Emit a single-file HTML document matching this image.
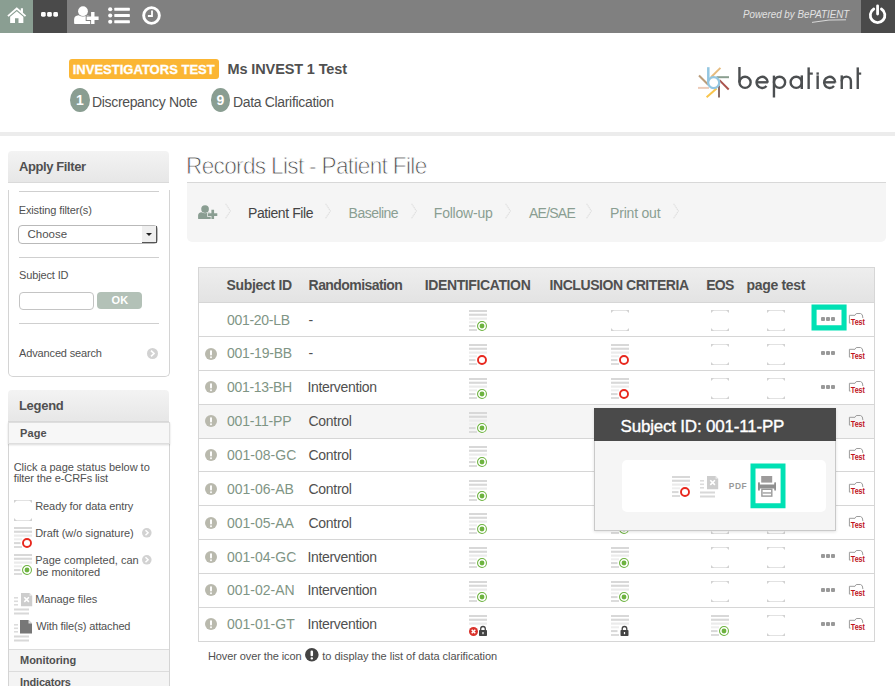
<!DOCTYPE html>
<html>
<head>
<meta charset="utf-8">
<title>Records List - Patient File</title>
<style>
*{box-sizing:border-box;margin:0;padding:0}
html,body{width:895px;height:686px;overflow:hidden;background:#fff}
body{font-family:"Liberation Sans",sans-serif;color:#505050;position:relative;font-size:14px}
.abs{position:absolute}
.t{position:absolute;white-space:nowrap;line-height:1}
svg{position:absolute;overflow:visible}
#bar{left:0;top:0;width:895px;height:33px;background:#808080}
#home{left:0;top:0;width:33px;height:33px;background:#8a9e92}
#dots{left:33px;top:0;width:34px;height:33px;background:#4a4a4a}
#power{left:861px;top:0;width:34px;height:33px;background:#4a4a4a}
#strip{left:0;top:132px;width:895px;height:4px;background:#ececec}
#badge{left:69px;top:59px;width:150px;height:19.5px;border-radius:3px;background:#fbb634;color:#fff;font-weight:bold;font-size:13.5px;line-height:18px;text-align:center;white-space:nowrap;letter-spacing:-0.3px}
.circ{width:19.6px;height:24px;border-radius:50%;background:#8a9e92;color:#fff;font-weight:bold;font-size:14px;line-height:25px;text-align:center}
.phead{left:8px;width:161px;height:32px;border-radius:4px 4px 0 0;background:linear-gradient(#f3f3f3,#e7e7e7);border-bottom:1px solid #dadada}
.hr{height:1px;background:#cfcfcf;left:19px;width:140px}
.sub{left:9px;width:160px;background:#f4f4f4;border-top:1px solid #dcdcdc}
.s12{font-size:12px}
.s11{font-size:11px}
#crumb{left:187px;top:182px;width:699px;height:60px;background:#f5f5f5;border-top:1px solid #d8d8d8;border-radius:0 0 5px 5px}
.cr{font-size:14px;color:#8a9e92;top:206px}
#thead{left:198px;top:267px;width:677px;height:36px;background:linear-gradient(#eeeeee,#e3e3e3);border:1px solid #d6d6d6}
.th{font-weight:bold;font-size:14px;color:#444;top:278px;letter-spacing:-0.2px}
.row{left:198px;width:677px;border:1px solid #d6d6d6;border-top:none;background:#fff}
.sid{color:#7f9585;font-size:14px;left:227px}
.rnd{color:#444;font-size:14px;left:308px}
</style>
</head>
<body>

<svg width="0" height="0" style="position:absolute">
<defs>
<g id="lines">
 <rect x="0" y="0" width="18" height="2" fill="#d8d8d8"/>
 <rect x="0" y="3.7" width="18" height="2.100" fill="#d8d8d8"/>
 <rect x="0" y="7.5" width="18" height="2.200" fill="#ebebeb"/>
 <rect x="0" y="11.3" width="8" height="2" fill="#eeeeee"/>
 <rect x="0" y="15.1" width="6.500" height="2" fill="#d8d8d8"/>
 <rect x="0" y="19" width="8" height="2" fill="#dcdcdc"/>
</g>
<g id="done">
 <use href="#lines"/>
 <circle cx="13" cy="16" r="5.6" fill="#fff"/>
 <circle cx="13" cy="16" r="4.450" fill="none" stroke="#6db33f" stroke-width="1.050"/>
 <circle cx="13" cy="16" r="2.450" fill="#6db33f"/>
</g>
<g id="draft">
 <use href="#lines"/>
 <circle cx="13" cy="16" r="5.6" fill="#fff"/>
 <circle cx="13" cy="16" r="4" fill="#fff" stroke="#e8281e" stroke-width="1.9"/>
</g>
<g id="empty">
 <rect x="0" y="0" width="18" height="1" fill="#e2e2e2"/><rect x="0" y="20" width="18" height="1" fill="#e2e2e2"/>
 <path d="M0 0H3L0 3ZM18 0H15L18 3ZM0 21H3L0 18ZM18 21H15L18 18Z" fill="#d2d2d2"/>
</g>
<g id="lock">
 <rect x="0" y="4" width="8" height="6" rx="0.8" fill="#444"/>
 <path d="M1.7 4.5V2.8a2.3 2.3 0 0 1 4.6 0V4.5" fill="none" stroke="#444" stroke-width="1.3"/>
 <rect x="3.4" y="6" width="1.2" height="2.2" fill="#fff"/>
</g>
<g id="more">
 <rect x="0" y="0" width="4" height="4" rx="1" fill="#999"/>
 <rect x="5" y="0" width="4" height="4" rx="1" fill="#999"/>
 <rect x="10" y="0" width="4" height="4" rx="1" fill="#999"/>
</g>
<g id="test">
 <path d="M1.600 10.100H0.4V2.300H6L7.300 0.5H11.500Q13.900 0.8 13.900 5.100" fill="none" stroke="#9c9c9c" stroke-width="1"/>
 <text x="1.8" y="11.900" font-family="Liberation Sans, sans-serif" font-size="8.600" font-weight="bold" fill="#c0141d" textLength="14.200" lengthAdjust="spacingAndGlyphs">Test</text>
</g>
<g id="info">
 <circle cx="6" cy="6" r="6" fill="#b9b9ad"/>
 <rect x="5.050" y="2.2" width="1.900" height="5.200" rx="0.9" fill="#fff"/>
 <rect x="5.050" y="8.300" width="1.900" height="1.900" rx="0.9" fill="#fff"/>
</g>
<g id="arrow">
 <circle cx="5.5" cy="5.5" r="5.5" fill="#d2d2d2"/>
 <path d="M4 2.6L7 5.5L4 8.4" fill="none" stroke="#fff" stroke-width="1.7"/>
</g>
<g id="userplus">
 <circle cx="9" cy="5.2" r="4.9"/>
 <path d="M0.1 17.200V13.500Q0.1 9.600 4.600 9.200Q9 12 13.400 9.200Q17.600 9.800 17.600 13V18H1Q0.1 18 0.1 17.200Z"/>
 <path d="M17.100 6h3.400v4.500h4.100v3.600h-4.100v3.900h-3.400v-3.900h-4.500v-3.600h4.500z" stroke="var(--bg)" stroke-width="1.800" paint-order="stroke"/>
</g>
</defs>
</svg>

<div id="bar" class="abs"></div><div id="home" class="abs"></div><div id="dots" class="abs"></div><div id="power" class="abs"></div><div id="strip" class="abs"></div>
<svg style="left:7px;top:6.5px" width="19.5" height="16.5" viewBox="0 0 20 17"><path d="M10 0.3L0.3 8.7L1.6 10L10 2.9L18.4 10L19.7 8.700L16.400 5.800V1.300H14.200V3.900Z" fill="#fff"/><path d="M10 4.3L3.2 10V16.500H8.200V11.500H11.800V16.500H16.800V10Z" fill="#fff"/></svg>
<svg style="left:40.8px;top:12px" width="17" height="5" viewBox="0 0 18 5.3"><rect x="0" y="0" width="5" height="5" rx="1.5" fill="#fff"/><rect x="6.5" y="0" width="5" height="5" rx="1.5" fill="#fff"/><rect x="13" y="0" width="5" height="5" rx="1.5" fill="#fff"/></svg>
<svg style="left:74.4px;top:6px;--bg:#808080" width="24.6" height="18.5" viewBox="0 0 24.6 18.5" fill="#fff"><use href="#userplus"/></svg>
<svg style="left:108.3px;top:6.8px" width="22" height="17" viewBox="0 0 23 18" fill="#fff"><circle cx="2.2" cy="2.400" r="2.200"/><circle cx="2.2" cy="9" r="2.2"/><circle cx="2.2" cy="15.600" r="2.200"/><rect x="6.5" y="0.8" width="16.500" height="3.200" rx="0.5"/><rect x="6.5" y="7.4" width="16.500" height="3.200" rx="0.5"/><rect x="6.5" y="14" width="16.500" height="3.200" rx="0.5"/></svg>
<svg style="left:142.3px;top:6px" width="19" height="19" viewBox="0 0 19 19"><circle cx="9.5" cy="9.5" r="7.850" fill="none" stroke="#fff" stroke-width="2.900"/><path d="M10 4.600V10H5.900" fill="none" stroke="#fff" stroke-width="1.800"/></svg>
<div class="t" style="left:743.20px;top:8.74px;font-size:10.7px;font-style:italic;color:#e2e2e2;transform-origin:0 0;transform:scaleX(0.9162);">Powered by BePATIENT</div>
<svg style="left:812px;top:19px" width="34" height="4" viewBox="0 0 34 4"><path d="M0 3.400Q17 0 34 0.800" fill="none" stroke="#e2e2e2" stroke-width="0.900"/></svg>
<svg style="left:868.3px;top:5.2px" width="19.2" height="19.2" viewBox="0 0 20 20"><path d="M6 4.200A7.600 7.600 0 1 0 14 4.200" fill="none" stroke="#fff" stroke-width="2.900" stroke-linecap="round"/><path d="M10 0.800V9.500" stroke="#fff" stroke-width="2.900" stroke-linecap="round"/></svg>
<div id="badge" class="abs"></div>
<div class="t" style="left:72.70px;top:62.80px;font-size:13px;font-weight:bold;color:#fff;letter-spacing:0.012px;-webkit-text-stroke:0.3px #fff;">INVESTIGATORS TEST</div>
<div class="t" style="left:227.60px;top:61.83px;font-size:14.5px;font-weight:bold;letter-spacing:-0.133px;">Ms INVEST 1 Test</div>
<div class="abs circ" style="left:70px;top:87.7px">1</div>
<div class="t" style="left:92.00px;top:95.15px;font-size:14px;letter-spacing:-0.333px;">Discrepancy Note</div>
<div class="abs circ" style="left:210.6px;top:87.7px">9</div>
<div class="t" style="left:232.90px;top:95.15px;font-size:14px;letter-spacing:-0.324px;">Data Clarification</div>
<svg style="left:0;top:0" width="895" height="130" viewBox="0 0 895 130" fill="none" stroke-linecap="butt">
<g stroke-width="2">
<path d="M720.4 67.9L711 77.3" stroke="#e6bb7e"/>
<path d="M716.5 77.2H729" stroke="#8a9e8f"/>
<path d="M719.4 80.1L728.7 89.5" stroke="#ab524c"/>
<path d="M719 85.5V97.4" stroke="#8b6e69"/>
<path d="M716.6 88.4L706.6 97.3" stroke="#f8c54c"/>
<path d="M698 87.9H709" stroke="#edccb9"/>
<path d="M699 75.5L708.2 84.7" stroke="#bb9d7b"/>
</g>
<path d="M708.3 67.2V82.4" stroke="#93c6e1" stroke-width="2.5"/>
<circle cx="713.7" cy="82.6" r="5.55" stroke="#93c6e1" stroke-width="2.3" fill="#fff"/>
<g stroke="#4c4f51" stroke-width="2.4">
<path d="M739.45 67V82.4"/><circle cx="745.05" cy="82.3" r="5.6"/>
<path d="M756.6 82.3H767.9"/><path d="M767.8 82.4A5.6 5.6 0 1 0 766.5 86"/>
<path d="M773.95 75.6V97.5"/><circle cx="779.55" cy="82.3" r="5.6"/>
<circle cx="796.2" cy="82.3" r="5.6"/><path d="M801.8 75.4V89"/>
<path d="M808.65 67.4V89"/><path d="M808.65 73.6H812.8" stroke-width="2.2"/>
<path d="M817.65 75.4V89"/><path d="M817.65 72.4V74.7"/>
<path d="M824.1 82.3H835.4"/><path d="M835.3 82.4A5.6 5.6 0 1 0 834 86"/>
<path d="M841.75 75.4V89"/><path d="M841.75 81.2A4.575 4.575 0 0 1 850.9 81.2V89"/>
<path d="M857.75 67.4V89"/><path d="M857.75 73.6H861.2" stroke-width="2.2"/>
</g>
</svg>
<div class="abs phead" style="top:151px"></div>
<div class="t" style="left:19.10px;top:160.10px;font-size:13px;font-weight:bold;letter-spacing:-0.418px;">Apply Filter</div>
<div class="abs" style="left:8px;top:190px;width:162px;height:187px;border:1px solid #d4d4d4;border-top:none;border-radius:0 0 5px 5px"></div>
<div class="abs hr" style="top:191px"></div>
<div class="t" style="left:18.70px;top:205.09px;font-size:11px;letter-spacing:-0.118px;">Existing filter(s)</div>
<div class="abs" style="left:18px;top:225px;width:140px;height:19px;border:1px solid #b9b9b9;border-radius:4px;background:#fff"></div>
<div class="abs" style="left:142px;top:226px;width:15px;height:17px;background:#efefef;border-right:1.3px solid #555;border-bottom:1.3px solid #555"></div>
<svg style="left:146px;top:233px" width="6" height="3" viewBox="0 0 6 3"><path d="M0 0H6L3 3Z" fill="#222"/></svg>
<div class="t" style="left:27.60px;top:229.37px;font-size:11.5px;letter-spacing:-0.040px;">Choose</div>
<div class="abs hr" style="top:257px"></div>
<div class="t" style="left:19.10px;top:269.79px;font-size:11px;letter-spacing:-0.144px;">Subject ID</div>
<div class="abs" style="left:19px;top:292px;width:75px;height:18px;border:1px solid #c4c4c4;border-radius:4px;background:#fff"></div>
<div class="abs" style="left:97px;top:292px;width:45px;height:17px;border-radius:4px;background:#b3c1b7"></div>
<div class="t" style="left:111.60px;top:294.99px;font-size:11px;font-weight:bold;color:#fff;letter-spacing:0.100px;">OK</div>
<div class="abs hr" style="top:323px"></div>
<div class="t" style="left:19.10px;top:347.69px;font-size:11px;letter-spacing:-0.150px;">Advanced search</div>
<svg style="left:146.500px;top:348px" width="11" height="11"><use href="#arrow"/></svg>
<div class="abs phead" style="top:390px"></div>
<div class="t" style="left:18.90px;top:398.80px;font-size:13px;font-weight:bold;letter-spacing:-0.260px;">Legend</div>
<div class="abs" style="left:8px;top:444px;width:162px;height:250px;border-left:1px solid #d4d4d4;border-right:1px solid #d4d4d4"></div>
<div class="abs" style="left:8px;top:422px;width:162px;height:22px;background:#f7f7f7;border:1px solid #dedede;box-shadow:0 1px 2px rgba(0,0,0,0.15)"></div>
<div class="t" style="left:20.10px;top:427.59px;font-size:11px;font-weight:bold;letter-spacing:0.067px;">Page</div>
<div class="t" style="left:13.70px;top:462.19px;font-size:11px;letter-spacing:-0.033px;">Click a page status below to</div>
<div class="t" style="left:13.70px;top:473.29px;font-size:11px;letter-spacing:-0.100px;">filter the e-CRFs list</div>
<svg style="left:14px;top:500px" width="18" height="21"><use href="#empty"/></svg>
<div class="t" style="left:35.20px;top:500.79px;font-size:11px;letter-spacing:-0.079px;">Ready for data entry</div>
<svg style="left:14px;top:527px" width="18" height="21"><use href="#draft"/></svg>
<div class="t" style="left:35.20px;top:527.99px;font-size:11px;letter-spacing:-0.055px;">Draft (w/o signature)</div>
<svg style="left:141.7px;top:528.2px" width="9.6" height="9.6" viewBox="0 0 11 11"><use href="#arrow"/></svg>
<svg style="left:14px;top:554px" width="18" height="21"><use href="#done"/></svg>
<div class="t" style="left:35.20px;top:554.89px;font-size:11px;letter-spacing:0.011px;">Page completed, can</div>
<div class="t" style="left:36.20px;top:566.79px;font-size:11px;letter-spacing:-0.018px;">be monitored</div>
<svg style="left:141.7px;top:555.2px" width="9.6" height="9.6" viewBox="0 0 11 11"><use href="#arrow"/></svg>
<svg style="left:14px;top:593px" width="18" height="22" viewBox="0 0 18 22">
<path d="M7 0H15.500L18.200 2.700V13.200H7Z" fill="#cdcdcd"/><path d="M15.500 0V2.700H18.200Z" fill="#e8e8e8"/>
<path d="M10.300 4.300L14.900 8.900M14.900 4.300L10.300 8.900" stroke="#fff" stroke-width="1.600"/>
<rect x="0" y="4" width="4" height="1.600" fill="#dcdcdc"/><rect x="0" y="7.500" width="4" height="1.600" fill="#dcdcdc"/><rect x="0" y="11" width="4" height="1.600" fill="#dcdcdc"/>
<rect x="0" y="15.500" width="15" height="2" fill="#d8d8d8"/><rect x="0" y="19.500" width="15" height="2" fill="#d8d8d8"/></svg>
<div class="t" style="left:35.20px;top:593.69px;font-size:11px;letter-spacing:-0.027px;">Manage files</div>
<svg style="left:14px;top:620px" width="18" height="22" viewBox="0 0 18 22">
<path d="M6 0H14.500L18 3.500V13.500H6Z" fill="#777"/><path d="M14.500 0V3.500H18Z" fill="#ddd"/>
<rect x="0" y="4" width="4" height="1.600" fill="#dcdcdc"/><rect x="0" y="7.500" width="4" height="1.600" fill="#dcdcdc"/><rect x="0" y="11" width="4" height="1.600" fill="#dcdcdc"/>
<rect x="0" y="15.500" width="15" height="2" fill="#d8d8d8"/><rect x="0" y="19.500" width="15" height="2" fill="#d8d8d8"/></svg>
<div class="t" style="left:36.20px;top:620.89px;font-size:11px;letter-spacing:-0.145px;">With file(s) attached</div>
<div class="abs sub" style="top:649px;height:22px"></div>
<div class="t" style="left:20.10px;top:654.79px;font-size:11px;font-weight:bold;letter-spacing:-0.078px;">Monitoring</div>
<div class="abs sub" style="top:671px;height:22px"></div>
<div class="t" style="left:20.10px;top:677.29px;font-size:11px;font-weight:bold;letter-spacing:-0.189px;">Indicators</div>
<div class="t" style="left:185.94px;top:154.33px;font-size:24.3px;color:#484848;letter-spacing:-0.723px;transform-origin:0 0;transform:scaleX(0.9300);-webkit-text-stroke:0.8px #fff;">Records List - Patient File</div>
<div id="crumb" class="abs"></div>
<svg style="left:197.7px;top:204.8px;--bg:#f5f5f5" width="19.3" height="14.5" viewBox="0 0 24.6 18.5" fill="#8a9e92"><use href="#userplus"/></svg>
<svg style="left:224.7px;top:203.4px" width="7" height="16" viewBox="0 0 7 16"><path d="M0.6 0.700L5.400 8L0.6 15.300" fill="none" stroke="#dedede" stroke-width="1.100" stroke-dasharray="1.400 0.600"/></svg>
<svg style="left:324.7px;top:203.4px" width="7" height="16" viewBox="0 0 7 16"><path d="M0.6 0.700L5.400 8L0.6 15.300" fill="none" stroke="#dedede" stroke-width="1.100" stroke-dasharray="1.400 0.600"/></svg>
<svg style="left:411.0px;top:203.4px" width="7" height="16" viewBox="0 0 7 16"><path d="M0.6 0.700L5.400 8L0.6 15.300" fill="none" stroke="#dedede" stroke-width="1.100" stroke-dasharray="1.400 0.600"/></svg>
<svg style="left:505.2px;top:203.4px" width="7" height="16" viewBox="0 0 7 16"><path d="M0.6 0.700L5.400 8L0.6 15.300" fill="none" stroke="#dedede" stroke-width="1.100" stroke-dasharray="1.400 0.600"/></svg>
<svg style="left:586.4px;top:203.4px" width="7" height="16" viewBox="0 0 7 16"><path d="M0.6 0.700L5.400 8L0.6 15.300" fill="none" stroke="#dedede" stroke-width="1.100" stroke-dasharray="1.400 0.600"/></svg>
<svg style="left:672.9px;top:203.4px" width="7" height="16" viewBox="0 0 7 16"><path d="M0.6 0.700L5.400 8L0.6 15.300" fill="none" stroke="#dedede" stroke-width="1.100" stroke-dasharray="1.400 0.600"/></svg>
<div class="t" style="left:248.00px;top:205.95px;font-size:14px;color:#444;letter-spacing:-0.418px;">Patient File</div>
<div class="t" style="left:348.60px;top:205.95px;font-size:14px;color:#8a9e92;letter-spacing:-0.529px;">Baseline</div>
<div class="t" style="left:433.80px;top:205.95px;font-size:14px;color:#8a9e92;letter-spacing:-0.212px;">Follow-up</div>
<div class="t" style="left:529.00px;top:205.95px;font-size:14px;color:#8a9e92;letter-spacing:-0.760px;">AE/SAE</div>
<div class="t" style="left:610.10px;top:205.95px;font-size:14px;color:#8a9e92;letter-spacing:-0.213px;">Print out</div>
<div id="thead" class="abs"></div>
<div class="t" style="left:226.60px;top:278.15px;font-size:14px;font-weight:bold;letter-spacing:-0.333px;">Subject ID</div>
<div class="t" style="left:308.60px;top:278.15px;font-size:14px;font-weight:bold;letter-spacing:-0.575px;">Randomisation</div>
<div class="t" style="left:424.70px;top:278.15px;font-size:14px;font-weight:bold;letter-spacing:-0.377px;">IDENTIFICATION</div>
<div class="t" style="left:549.60px;top:278.15px;font-size:14px;font-weight:bold;letter-spacing:-0.447px;">INCLUSION CRITERIA</div>
<div class="t" style="left:706.20px;top:278.15px;font-size:14px;font-weight:bold;letter-spacing:-0.700px;">EOS</div>
<div class="t" style="left:746.40px;top:278.15px;font-size:14px;font-weight:bold;letter-spacing:-0.300px;">page test</div>
<div class="abs row" style="top:303px;height:34px;background:#fff"></div>
<div class="t" style="left:227.00px;top:312.57px;font-size:14px;color:#7f9585;letter-spacing:-0.288px;">001-20-LB</div>
<div class="t" style="left:308.40px;top:312.57px;font-size:14px;">-</div>
<svg style="left:469px;top:310.3px" width="18" height="21"><use href="#done"/></svg>
<svg style="left:611px;top:310.3px" width="18" height="21"><use href="#empty"/></svg>
<svg style="left:711px;top:310.3px" width="18" height="21"><use href="#empty"/></svg>
<svg style="left:767px;top:310.3px" width="18" height="21"><use href="#empty"/></svg>
<svg style="left:821px;top:316.9px" width="14" height="4"><use href="#more"/></svg>
<svg style="left:849px;top:313.0px" width="17" height="13"><use href="#test"/></svg>
<div class="abs row" style="top:337px;height:34px;background:#fff"></div>
<div class="t" style="left:227.00px;top:346.42px;font-size:14px;color:#7f9585;letter-spacing:-0.225px;">001-19-BB</div>
<div class="t" style="left:308.40px;top:346.42px;font-size:14px;">-</div>
<svg style="left:205px;top:347.5px" width="12" height="12"><use href="#info"/></svg>
<svg style="left:469px;top:344.2px" width="18" height="21"><use href="#draft"/></svg>
<svg style="left:611px;top:344.2px" width="18" height="21"><use href="#draft"/></svg>
<svg style="left:711px;top:344.2px" width="18" height="21"><use href="#empty"/></svg>
<svg style="left:767px;top:344.2px" width="18" height="21"><use href="#empty"/></svg>
<svg style="left:821px;top:350.8px" width="14" height="4"><use href="#more"/></svg>
<svg style="left:849px;top:346.9px" width="17" height="13"><use href="#test"/></svg>
<div class="abs row" style="top:371px;height:34px;background:#fff"></div>
<div class="t" style="left:227.00px;top:380.27px;font-size:14px;color:#7f9585;letter-spacing:-0.312px;">001-13-BH</div>
<div class="t" style="left:307.40px;top:380.27px;font-size:14px;letter-spacing:-0.318px;">Intervention</div>
<svg style="left:205px;top:381.3px" width="12" height="12"><use href="#info"/></svg>
<svg style="left:469px;top:378.0px" width="18" height="21"><use href="#done"/></svg>
<svg style="left:611px;top:378.0px" width="18" height="21"><use href="#draft"/></svg>
<svg style="left:711px;top:378.0px" width="18" height="21"><use href="#empty"/></svg>
<svg style="left:767px;top:378.0px" width="18" height="21"><use href="#empty"/></svg>
<svg style="left:821px;top:384.6px" width="14" height="4"><use href="#more"/></svg>
<svg style="left:849px;top:380.7px" width="17" height="13"><use href="#test"/></svg>
<div class="abs row" style="top:405px;height:34px;background:#f5f5f5"></div>
<div class="t" style="left:227.00px;top:414.12px;font-size:14px;color:#7f9585;letter-spacing:-0.175px;">001-11-PP</div>
<div class="t" style="left:308.40px;top:414.12px;font-size:14px;letter-spacing:-0.267px;">Control</div>
<svg style="left:205px;top:415.2px" width="12" height="12"><use href="#info"/></svg>
<svg style="left:469px;top:411.9px" width="18" height="21"><use href="#done"/></svg>
<svg style="left:611px;top:411.9px" width="18" height="21"><use href="#done"/></svg>
<svg style="left:711px;top:411.9px" width="18" height="21"><use href="#empty"/></svg>
<svg style="left:767px;top:411.9px" width="18" height="21"><use href="#empty"/></svg>
<svg style="left:821px;top:418.5px" width="14" height="4"><use href="#more"/></svg>
<svg style="left:849px;top:414.6px" width="17" height="13"><use href="#test"/></svg>
<div class="abs row" style="top:439px;height:33px;background:#fff"></div>
<div class="t" style="left:227.00px;top:447.97px;font-size:14px;color:#7f9585;">001-08-GC</div>
<div class="t" style="left:308.40px;top:447.97px;font-size:14px;letter-spacing:-0.267px;">Control</div>
<svg style="left:205px;top:449.0px" width="12" height="12"><use href="#info"/></svg>
<svg style="left:469px;top:445.7px" width="18" height="21"><use href="#done"/></svg>
<svg style="left:611px;top:445.7px" width="18" height="21"><use href="#done"/></svg>
<svg style="left:711px;top:445.7px" width="18" height="21"><use href="#empty"/></svg>
<svg style="left:767px;top:445.7px" width="18" height="21"><use href="#empty"/></svg>
<svg style="left:821px;top:452.3px" width="14" height="4"><use href="#more"/></svg>
<svg style="left:849px;top:448.4px" width="17" height="13"><use href="#test"/></svg>
<div class="abs row" style="top:472px;height:34px;background:#fff"></div>
<div class="t" style="left:227.00px;top:481.82px;font-size:14px;color:#7f9585;">001-06-AB</div>
<div class="t" style="left:308.40px;top:481.82px;font-size:14px;letter-spacing:-0.267px;">Control</div>
<svg style="left:205px;top:482.9px" width="12" height="12"><use href="#info"/></svg>
<svg style="left:469px;top:479.6px" width="18" height="21"><use href="#done"/></svg>
<svg style="left:611px;top:479.6px" width="18" height="21"><use href="#done"/></svg>
<svg style="left:711px;top:479.6px" width="18" height="21"><use href="#empty"/></svg>
<svg style="left:767px;top:479.6px" width="18" height="21"><use href="#empty"/></svg>
<svg style="left:821px;top:486.2px" width="14" height="4"><use href="#more"/></svg>
<svg style="left:849px;top:482.3px" width="17" height="13"><use href="#test"/></svg>
<div class="abs row" style="top:506px;height:34px;background:#fff"></div>
<div class="t" style="left:227.00px;top:515.67px;font-size:14px;color:#7f9585;">001-05-AA</div>
<div class="t" style="left:308.40px;top:515.67px;font-size:14px;letter-spacing:-0.267px;">Control</div>
<svg style="left:205px;top:516.7px" width="12" height="12"><use href="#info"/></svg>
<svg style="left:469px;top:513.4px" width="18" height="21"><use href="#done"/></svg>
<svg style="left:611px;top:513.4px" width="18" height="21"><use href="#done"/></svg>
<svg style="left:711px;top:513.4px" width="18" height="21"><use href="#empty"/></svg>
<svg style="left:767px;top:513.4px" width="18" height="21"><use href="#empty"/></svg>
<svg style="left:821px;top:520.0px" width="14" height="4"><use href="#more"/></svg>
<svg style="left:849px;top:516.1px" width="17" height="13"><use href="#test"/></svg>
<div class="abs row" style="top:540px;height:34px;background:#fff"></div>
<div class="t" style="left:227.00px;top:549.52px;font-size:14px;color:#7f9585;">001-04-GC</div>
<div class="t" style="left:307.40px;top:549.52px;font-size:14px;letter-spacing:-0.318px;">Intervention</div>
<svg style="left:205px;top:550.6px" width="12" height="12"><use href="#info"/></svg>
<svg style="left:469px;top:547.3px" width="18" height="21"><use href="#done"/></svg>
<svg style="left:611px;top:547.3px" width="18" height="21"><use href="#done"/></svg>
<svg style="left:711px;top:547.3px" width="18" height="21"><use href="#empty"/></svg>
<svg style="left:767px;top:547.3px" width="18" height="21"><use href="#empty"/></svg>
<svg style="left:821px;top:553.9px" width="14" height="4"><use href="#more"/></svg>
<svg style="left:849px;top:550.0px" width="17" height="13"><use href="#test"/></svg>
<div class="abs row" style="top:574px;height:34px;background:#fff"></div>
<div class="t" style="left:227.00px;top:583.37px;font-size:14px;color:#7f9585;">001-02-AN</div>
<div class="t" style="left:307.40px;top:583.37px;font-size:14px;letter-spacing:-0.318px;">Intervention</div>
<svg style="left:205px;top:584.4px" width="12" height="12"><use href="#info"/></svg>
<svg style="left:469px;top:581.1px" width="18" height="21"><use href="#done"/></svg>
<svg style="left:611px;top:581.1px" width="18" height="21"><use href="#done"/></svg>
<svg style="left:711px;top:581.1px" width="18" height="21"><use href="#empty"/></svg>
<svg style="left:767px;top:581.1px" width="18" height="21"><use href="#empty"/></svg>
<svg style="left:821px;top:587.7px" width="14" height="4"><use href="#more"/></svg>
<svg style="left:849px;top:583.8px" width="17" height="13"><use href="#test"/></svg>
<div class="abs row" style="top:608px;height:34px;background:#fff"></div>
<div class="t" style="left:227.00px;top:617.22px;font-size:14px;color:#7f9585;">001-01-GT</div>
<div class="t" style="left:307.40px;top:617.22px;font-size:14px;letter-spacing:-0.318px;">Intervention</div>
<svg style="left:205px;top:618.3px" width="12" height="12"><use href="#info"/></svg>
<svg style="left:469px;top:615.0px" width="18" height="21"><use href="#lines"/><rect x="0" y="10.500" width="19" height="11" fill="#fff"/><circle cx="4.5" cy="16.500" r="4.500" fill="#d9322b"/><path d="M2.700 14.700L6.300 18.300M6.300 14.700L2.700 18.300" stroke="#fff" stroke-width="1.500"/><use href="#lock" x="10" y="11"/></svg>
<svg style="left:611px;top:615.0px" width="18" height="21"><use href="#lines"/><rect x="8.5" y="10.500" width="10" height="11" fill="#fff"/><use href="#lock" x="9.5" y="11"/></svg>
<svg style="left:711px;top:615.0px" width="18" height="21"><use href="#done"/></svg>
<svg style="left:767px;top:615.0px" width="18" height="21"><use href="#empty"/></svg>
<svg style="left:821px;top:621.6px" width="14" height="4"><use href="#more"/></svg>
<svg style="left:849px;top:617.7px" width="17" height="13"><use href="#test"/></svg>
<svg style="left:0;top:0" width="895" height="686"><path fill-rule="evenodd" fill="#00e1b4" d="M811.500 304.500H846.600V330.400H811.500ZM816.600 309.700V325.300H841.500V309.700Z"/></svg>
<div class="t" style="left:207.90px;top:650.99px;font-size:11px;letter-spacing:-0.094px;">Hover over the icon</div>
<svg style="left:305.1px;top:647.9px" width="13.6" height="13.6" viewBox="0 0 12 12"><circle cx="6" cy="6" r="6" fill="#444"/><rect x="4.9" y="2.300" width="2.200" height="5" rx="1" fill="#fff"/><rect x="4.9" y="8.200" width="2.200" height="2" rx="1" fill="#fff"/></svg>
<div class="t" style="left:322.30px;top:650.99px;font-size:11px;letter-spacing:-0.030px;">to display the list of data clarification</div>
<div class="abs" style="left:594px;top:408px;width:242px;height:122.5px;background:#f5f5f5;border:1px solid #c9c9c9;box-shadow:0 1px 3px rgba(0,0,0,0.12)"></div>
<div class="abs" style="left:594px;top:407.7px;width:242px;height:33.8px;background:#4a4a4a"></div>
<div class="t" style="left:620.50px;top:417.91px;font-size:17px;color:#fff;letter-spacing:-0.200px;-webkit-text-stroke:0.35px #fff;">Subject ID: 001-11-PP</div>
<div class="abs" style="left:621.6px;top:459.7px;width:204.2px;height:52.4px;background:#fff;border-radius:5px"></div>
<svg style="left:672.1px;top:476.1px" width="18" height="21"><use href="#draft"/></svg>
<svg style="left:699.9px;top:476.1px" width="18" height="22" viewBox="0 0 18 22">
<path d="M7 0H15.500L18.200 2.700V13.200H7Z" fill="#cdcdcd"/><path d="M15.500 0V2.700H18.200Z" fill="#e8e8e8"/>
<path d="M10.300 4.300L14.900 8.900M14.900 4.300L10.300 8.900" stroke="#fff" stroke-width="1.600"/>
<rect x="0" y="4" width="4" height="1.600" fill="#dcdcdc"/><rect x="0" y="7.500" width="4" height="1.600" fill="#dcdcdc"/><rect x="0" y="11" width="4" height="1.600" fill="#dcdcdc"/>
<rect x="0" y="15.500" width="15" height="2" fill="#d8d8d8"/><rect x="0" y="19.500" width="15" height="2" fill="#d8d8d8"/></svg>
<div class="t" style="left:728.80px;top:482.39px;font-size:8.4px;font-weight:bold;color:#999;letter-spacing:0.500px;">PDF</div>
<svg style="left:0;top:0" width="895" height="686"><path fill-rule="evenodd" fill="#00e1b4" d="M750.500 463.400H785.500V508.200H750.500ZM755.500 468.400V503.200H780.600V468.400Z"/></svg>
<svg style="left:758px;top:476.1px" width="18" height="21" viewBox="0 0 18 21">
<rect x="3.2" y="0" width="11" height="6.600" fill="#9d9b9b"/>
<path d="M0 7.600Q0 6.100 1 6.100Q1.900 6.100 1.900 7.600V8.400H16.200V7.600Q16.200 6.100 17.100 6.100Q18 6.100 18 7.600V13.200Q18 14.700 17.100 14.700Q16.200 14.700 16.200 13.200V12.600H1.900V13.200Q1.900 14.700 1 14.700Q0 14.700 0 13.200Z" fill="#8f8f8f"/>
<rect x="3.900" y="13.300" width="9.900" height="6.800" fill="#fff" stroke="#999" stroke-width="1.400"/>
<rect x="4.600" y="16.300" width="8.500" height="1.300" fill="#999"/>
</svg>
</body>
</html>
